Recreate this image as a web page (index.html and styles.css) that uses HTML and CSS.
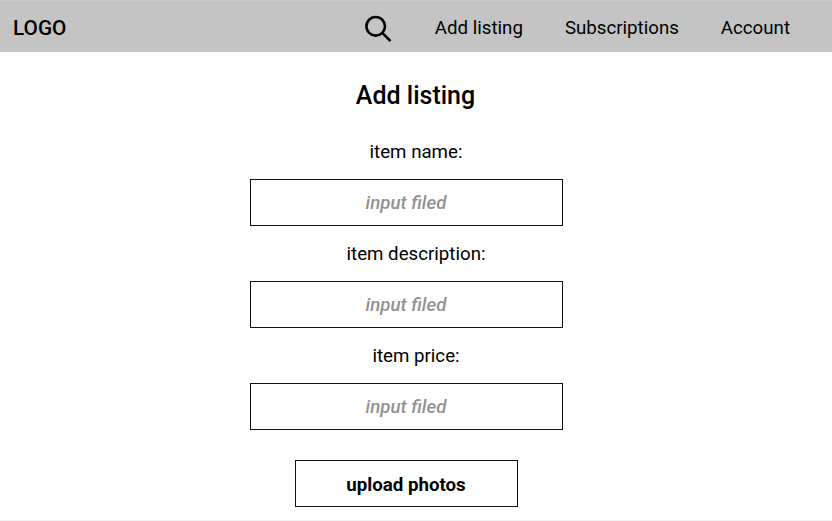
FILE: index.html
```html
<!DOCTYPE html>
<html lang="en">
<head>
<meta charset="utf-8">
<title>Add listing</title>
<link rel="stylesheet" href="styles.css">
</head>
<body>
<header class="topbar">
  <a class="logo">LOGO</a>
  <nav class="nav">
    <svg class="search" viewBox="0 0 28 28" width="28" height="28" aria-hidden="true"><circle cx="11.7" cy="12.3" r="9.3"/><path d="M18.3 18.9L26.5 27.1"/></svg>
    <a>Add listing</a>
    <a>Subscriptions</a>
    <a>Account</a>
  </nav>
</header>
<main class="form">
  <h1>Add listing</h1>
  <label for="name">item name:</label>
  <input class="field" id="name" placeholder="input filed">
  <label for="description">item description:</label>
  <input class="field" id="description" placeholder="input filed">
  <label for="price">item price:</label>
  <input class="field" id="price" placeholder="input filed">
  <button class="upload" type="button">upload photos</button>
</main>
</body>
</html>
```

FILE: styles.css
```css
* { box-sizing: border-box; }
body {
  margin: 0;
  height: 521px;
  overflow: hidden;
  border-bottom: 1px solid #f1f1f1;
  background: #fff;
  color: #000;
  font: 400 18.7px/22px Roboto, sans-serif;
}
.topbar {
  display: flex;
  justify-content: space-between;
  align-items: center;
  height: 52px;
  padding: 2px 42px 0 13px;
  border-top: 1px solid #cbcbcb;
  background: #c4c4c4;
}
.logo { font-size: 20.8px; font-weight: 500; }
.nav { display: flex; align-items: center; gap: 42px; }
.search {
  margin-right: 1px;
  overflow: visible;
  fill: none;
  stroke: #000;
  stroke-width: 2.6;
}
.form {
  display: flex;
  flex-direction: column;
  align-items: center;
  width: 313px;
  margin-left: 250px;
}
h1 {
  margin: 29px 0 30px;
  padding-left: 18px;
  font-size: 25px;
  line-height: 30px;
  font-weight: 500;
}
label { height: 22px; margin-bottom: 16px; padding-left: 19px; }
.field {
  width: 313px;
  height: 47px;
  margin: 0 0 17px;
  padding: 1px 1px 0 0;
  border: 1px solid #111;
  border-radius: 0;
  background: #fff;
  font: italic 500 18.7px/22px Roboto, sans-serif;
  text-align: center;
}
.field::placeholder { color: #929292; opacity: 1; }
.upload {
  width: 223px;
  height: 47px;
  margin-top: 13px;
  padding: 2px 1px 0 0;
  border: 1px solid #111;
  background: #fff;
  color: #000;
  font: 700 18.7px/22px Roboto, sans-serif;
}
```
